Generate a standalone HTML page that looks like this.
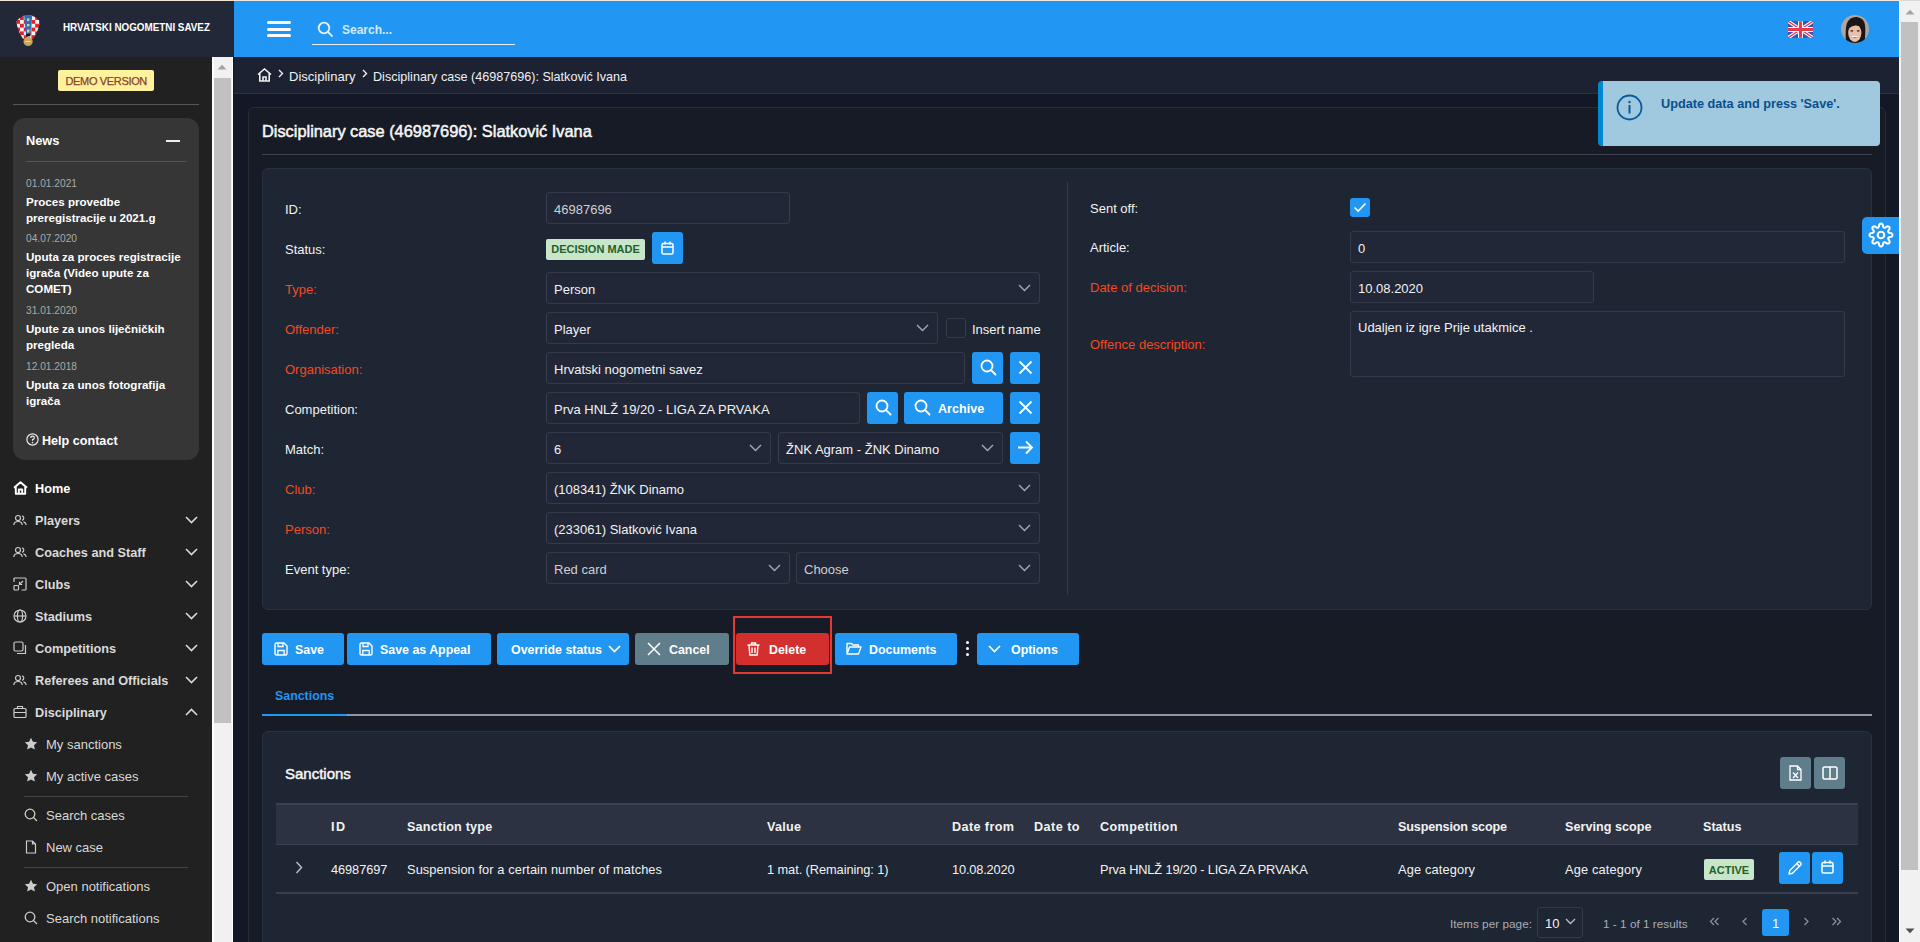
<!DOCTYPE html>
<html><head><meta charset="utf-8"><style>
*{box-sizing:border-box;margin:0;padding:0}
html,body{width:1920px;height:942px;overflow:hidden}
body{background:#121826;font-family:"Liberation Sans",sans-serif;color:#f2f2f2;position:relative;font-size:13px}
.a{position:absolute}
.t{position:absolute;white-space:nowrap;line-height:20px;height:20px}
svg{display:block}
.card{position:absolute;border-radius:6px}
.inp{position:absolute;background:#212737;border:1px solid #343a49;border-radius:3px;height:32px}
.inp span{position:absolute;left:7px;top:6px;line-height:20px;white-space:nowrap;color:#f2f2f2}
.chev{position:absolute;right:8px;top:11px}
.btn{position:absolute;background:#2196f3;border-radius:3px;color:#fff;font-weight:bold}
</style></head><body>
<div class="a" style="left:0px;top:0px;width:1899px;height:1px;background:#f0e6dc;"></div><div class="a" style="left:1899px;top:0px;width:21px;height:1px;background:#d9d9d9;"></div><div class="a" style="left:0px;top:1px;width:234px;height:56px;background:#222838;"></div><div class="a" style="left:234px;top:1px;width:1665px;height:56px;background:#2196f3;"></div><div class="a" style="left:0px;top:57px;width:212px;height:885px;background:#212121;"></div><div class="a" style="left:212px;top:57px;width:21px;height:885px;background:#f1f1f1;border-left:2px solid #fff;border-right:1px solid #fff"></div><div class="a" style="left:233px;top:57px;width:1px;height:885px;background:#15171c;"></div><div class="a" style="left:234px;top:57px;width:1665px;height:37px;background:#1c2232;border-bottom:1px solid #2a3142"></div><div class="a" style="left:1899px;top:1px;width:21px;height:941px;background:#f1f1f1;border-left:1px solid #fdf8f2"></div><div class="card" style="left:248px;top:107px;width:1638px;height:900px;background:#171b25;border:1px solid #262b36"></div><div class="t" style="left:262px;top:121px;font-size:16.4px;color:#f6f6f6;letter-spacing:-0.020px;-webkit-text-stroke:0.5px #f6f6f6">Disciplinary case (46987696): Slatković Ivana</div><div class="a" style="left:262px;top:154px;width:1610px;height:1px;background:#40444e;"></div><div class="card" style="left:262px;top:168px;width:1610px;height:442px;background:#1e2533;border:1px solid #293040"></div><div class="a" style="left:1067px;top:182px;width:1px;height:413px;background:#333a48;"></div><svg class="a" style="left:217px;top:64px" width="10" height="6" viewBox="0 0 10 6"><path d="M0.5 5.5 L5 0.8 L9.5 5.5 Z" fill="#a3a3a3"/></svg><div class="a" style="left:214px;top:78px;width:17px;height:645px;background:#c1c1c1;"></div><svg class="a" style="left:1905px;top:9px" width="10" height="6" viewBox="0 0 10 6"><path d="M0.5 5.5 L5 0.8 L9.5 5.5 Z" fill="#a3a3a3"/></svg><div class="a" style="left:1901px;top:22px;width:17px;height:848px;background:#c1c1c1;"></div><svg class="a" style="left:1905px;top:928px" width="10" height="6" viewBox="0 0 10 6"><path d="M0.5 0.5 L5 5.2 L9.5 0.5 Z" fill="#505050"/></svg><svg class="a" style="left:12px;top:12px" width="32" height="38" viewBox="0 0 32 38"><defs><clipPath id="shc"><path d="M4.2 9.3 Q8 5.5 12.1 3.6 L20.2 3.6 Q24.5 5.5 28 9.3 Q26 20 21.5 26.5 L16 28 L10.8 26.5 Q6 20 4.2 9.3 Z"/></clipPath>
 <pattern id="chk" x="4.2" y="8" width="7.6" height="7.6" patternUnits="userSpaceOnUse"><rect width="7.6" height="7.6" fill="#f2f2f2"/><rect width="3.8" height="3.8" fill="#e1252b"/><rect x="3.8" y="3.8" width="3.8" height="3.8" fill="#e1252b"/></pattern></defs>
 <g clip-path="url(#shc)"><rect width="32" height="30" fill="url(#chk)"/></g>
 <path d="M12.1 3.2 L20.2 3.2 L18.2 23.5 L14.1 23.5 Z" fill="#2f6fb8"/>
 <rect x="15" y="6.5" width="2.4" height="2.4" fill="#d9cf9a"/><rect x="15" y="12" width="2.4" height="2.4" fill="#d9cf9a"/><rect x="15" y="17.5" width="2.4" height="3" fill="#d9cf9a"/>
 <rect x="14.1" y="21.8" width="4.1" height="2.6" fill="#101a2c"/>
 <circle cx="16.1" cy="29.5" r="4.6" fill="#c9a455"/>
 <rect x="13.5" y="29" width="5" height="1" fill="#efe0b8"/></svg><div class="t" style="left:63px;top:17.3px;font-size:11.2px;color:#fff;font-weight:bold;transform:scaleX(0.88);transform-origin:0 0">HRVATSKI NOGOMETNI SAVEZ</div><div class="a" style="left:267px;top:21px;width:24px;height:3px;background:#fff;border-radius:2px"></div><div class="a" style="left:267px;top:27.5px;width:24px;height:3.0px;background:#fff;border-radius:2px"></div><div class="a" style="left:267px;top:34px;width:24px;height:3px;background:#fff;border-radius:2px"></div><svg class="a" style="left:317px;top:21px" width="17" height="17" viewBox="0 0 17 17"><circle cx="7" cy="7" r="5.3" fill="none" stroke="#e6f2fd" stroke-width="1.8"/><path d="M11 11 L15 15" stroke="#e6f2fd" stroke-width="1.8" stroke-linecap="round"/></svg><div class="t" style="left:342px;top:20px;font-size:12px;color:#d4e9fc;font-weight:bold;">Search...</div><div class="a" style="left:312px;top:43.5px;width:203px;height:1.5px;background:#e6f2fd;"></div><svg class="a" style="left:1788px;top:21px" width="25" height="17" viewBox="0 0 60 40"><rect width="60" height="40" fill="#3f51b5"/>
 <path d="M0 0 L60 40 M60 0 L0 40" stroke="#fff" stroke-width="8"/>
 <path d="M0 0 L60 40 M60 0 L0 40" stroke="#e53950" stroke-width="3"/>
 <path d="M30 0 V40 M0 20 H60" stroke="#fff" stroke-width="12"/>
 <path d="M30 0 V40 M0 20 H60" stroke="#e53950" stroke-width="7"/></svg><svg class="a" style="left:1841px;top:15px" width="28" height="28" viewBox="0 0 28 28"><defs><clipPath id="avc"><circle cx="14" cy="14" r="14"/></clipPath></defs>
 <g clip-path="url(#avc)">
 <rect width="28" height="28" fill="#a9a7a4"/>
 <path d="M5 28 Q4 14 6 8 Q9 1.5 16 2 Q23 3 24 10 Q25 18 23 28 Z" fill="#1c1614"/>
 <ellipse cx="13.8" cy="18" rx="6.6" ry="9" fill="#e8c0aa"/>
 <path d="M7 14 Q8 7 13 7.5 Q19 7 21 13 Q19 10.5 15 10.5 Q11 10 7 14 Z" fill="#1c1614"/>
 <ellipse cx="10.8" cy="15.8" rx="1.6" ry="0.9" fill="#5a3a30"/><ellipse cx="17.2" cy="15.8" rx="1.6" ry="0.9" fill="#5a3a30"/>
 <path d="M10.5 21.5 Q13.8 24.5 17 21.5 Z" fill="#e05a6a"/>
 <path d="M11 21.5 H16.5" stroke="#fff" stroke-width="1"/>
 <path d="M20 20 Q22 24 21 28 H24 V18 Z" fill="#1c1614"/>
 </g></svg><div class="a" style="left:58px;top:70px;width:96px;height:21px;background:#fff29c;border-radius:2px"></div><div class="t" style="left:65.5px;top:70.5px;font-size:11px;color:#8b3f2a;letter-spacing:-0.343px;-webkit-text-stroke:0.25px #8b3f2a">DEMO VERSION</div><div class="a" style="left:13px;top:103.5px;width:186px;height:1.0px;background:#555;"></div><div class="a" style="left:13px;top:118px;width:186px;height:342px;background:#363636;border-radius:12px"></div><div class="t" style="left:26px;top:131px;font-size:12.8px;color:#fff;font-weight:bold;">News</div><div class="a" style="left:166px;top:139.5px;width:14px;height:2.0px;background:#eee;"></div><div class="a" style="left:26px;top:161px;width:160px;height:1px;background:#555;"></div><div class="t" style="left:26px;top:174px;font-size:10.2px;color:#aaa;">01.01.2021</div><div class="t" style="left:26px;top:192px;font-size:11.6px;color:#fff;font-weight:bold;">Proces provedbe</div><div class="t" style="left:26px;top:208px;font-size:11.6px;color:#fff;font-weight:bold;">preregistracije u 2021.g</div><div class="t" style="left:26px;top:229px;font-size:10.2px;color:#aaa;">04.07.2020</div><div class="t" style="left:26px;top:247px;font-size:11.6px;color:#fff;font-weight:bold;">Uputa za proces registracije</div><div class="t" style="left:26px;top:263px;font-size:11.6px;color:#fff;font-weight:bold;">igrača (Video upute za</div><div class="t" style="left:26px;top:279px;font-size:11.6px;color:#fff;font-weight:bold;">COMET)</div><div class="t" style="left:26px;top:301px;font-size:10.2px;color:#aaa;">31.01.2020</div><div class="t" style="left:26px;top:319px;font-size:11.6px;color:#fff;font-weight:bold;">Upute za unos liječničkih</div><div class="t" style="left:26px;top:335px;font-size:11.6px;color:#fff;font-weight:bold;">pregleda</div><div class="t" style="left:26px;top:357px;font-size:10.2px;color:#aaa;">12.01.2018</div><div class="t" style="left:26px;top:375px;font-size:11.6px;color:#fff;font-weight:bold;">Uputa za unos fotografija</div><div class="t" style="left:26px;top:391px;font-size:11.6px;color:#fff;font-weight:bold;">igrača</div><svg class="a" style="left:26px;top:433px" width="13" height="13" viewBox="0 0 13 13"><circle cx="6.5" cy="6.5" r="5.6" fill="none" stroke="#eee" stroke-width="1.2"/><path d="M4.7 5 Q4.7 3.2 6.5 3.2 Q8.3 3.2 8.3 4.8 Q8.3 6 6.5 6.6 V7.8" fill="none" stroke="#eee" stroke-width="1.2"/><circle cx="6.5" cy="9.6" r="0.8" fill="#eee"/></svg><div class="t" style="left:42px;top:431px;font-size:12.6px;color:#fff;font-weight:bold;">Help contact</div><div class="a" style="left:13px;top:481px"><svg width="15" height="14" viewBox="0 0 15 14"><path d="M1 6.8 L7.5 1.2 L14 6.8 M2.8 5.5 V12.8 H12.2 V5.5 M5.8 12.8 V8.5 H9.2 V12.8" fill="none" stroke="#fff" stroke-width="1.9" stroke-linejoin="round"/></svg></div><div class="t" style="left:35px;top:479px;font-size:12.7px;color:#fff;font-weight:bold;">Home</div><div class="a" style="left:13px;top:513px"><svg width="14" height="14" viewBox="0 0 14 14"><circle cx="5" cy="5" r="2.5" fill="none" stroke="#ccc" stroke-width="1.2"/><path d="M0.8 12 Q1 8.5 5 8.5 Q9 8.5 9.2 12" fill="none" stroke="#ccc" stroke-width="1.2"/><path d="M9 2.8 A2.3 2.3 0 0 1 9 7.3 M10.5 8.8 Q13 9.5 13.2 12" fill="none" stroke="#ccc" stroke-width="1.2"/></svg></div><div class="t" style="left:35px;top:511px;font-size:12.7px;color:#dadada;font-weight:bold;">Players</div><div class="a" style="left:185px;top:516px"><svg width="13" height="8" viewBox="0 0 13 8"><path d="M1 1 L6.5 6.5 L12 1" fill="none" stroke="#d8d8d8" stroke-width="1.6"/></svg></div><div class="a" style="left:13px;top:545px"><svg width="14" height="14" viewBox="0 0 14 14"><circle cx="5" cy="5" r="2.5" fill="none" stroke="#ccc" stroke-width="1.2"/><path d="M0.8 12 Q1 8.5 5 8.5 Q9 8.5 9.2 12" fill="none" stroke="#ccc" stroke-width="1.2"/><path d="M9 2.8 A2.3 2.3 0 0 1 9 7.3 M10.5 8.8 Q13 9.5 13.2 12" fill="none" stroke="#ccc" stroke-width="1.2"/></svg></div><div class="t" style="left:35px;top:543px;font-size:12.7px;color:#dadada;font-weight:bold;">Coaches and Staff</div><div class="a" style="left:185px;top:548px"><svg width="13" height="8" viewBox="0 0 13 8"><path d="M1 1 L6.5 6.5 L12 1" fill="none" stroke="#d8d8d8" stroke-width="1.6"/></svg></div><div class="a" style="left:13px;top:577px"><svg width="14" height="14" viewBox="0 0 14 14"><path d="M1 5 V2 Q1 1 2 1 H12 Q13 1 13 2 V12 Q13 13 12 13 H8.5" fill="none" stroke="#ccc" stroke-width="1.2"/><rect x="1" y="8.5" width="4.5" height="4.5" rx="0.8" fill="none" stroke="#ccc" stroke-width="1.2"/><path d="M10 4 L6.5 7.5 M6.5 4.8 V7.5 H9.2" fill="none" stroke="#ccc" stroke-width="1.2"/></svg></div><div class="t" style="left:35px;top:575px;font-size:12.7px;color:#dadada;font-weight:bold;">Clubs</div><div class="a" style="left:185px;top:580px"><svg width="13" height="8" viewBox="0 0 13 8"><path d="M1 1 L6.5 6.5 L12 1" fill="none" stroke="#d8d8d8" stroke-width="1.6"/></svg></div><div class="a" style="left:13px;top:609px"><svg width="14" height="14" viewBox="0 0 14 14"><circle cx="7" cy="7" r="6" fill="none" stroke="#ccc" stroke-width="1.2"/><ellipse cx="7" cy="7" rx="2.6" ry="6" fill="none" stroke="#ccc" stroke-width="1.2"/><path d="M1 7 H13" stroke="#ccc" stroke-width="1.2"/></svg></div><div class="t" style="left:35px;top:607px;font-size:12.7px;color:#dadada;font-weight:bold;">Stadiums</div><div class="a" style="left:185px;top:612px"><svg width="13" height="8" viewBox="0 0 13 8"><path d="M1 1 L6.5 6.5 L12 1" fill="none" stroke="#d8d8d8" stroke-width="1.6"/></svg></div><div class="a" style="left:13px;top:641px"><svg width="14" height="14" viewBox="0 0 14 14"><rect x="1" y="1" width="9" height="9" rx="1.5" fill="none" stroke="#ccc" stroke-width="1.2"/><path d="M12.5 4 V12.5 H4" fill="none" stroke="#ccc" stroke-width="1.2"/></svg></div><div class="t" style="left:35px;top:639px;font-size:12.7px;color:#dadada;font-weight:bold;">Competitions</div><div class="a" style="left:185px;top:644px"><svg width="13" height="8" viewBox="0 0 13 8"><path d="M1 1 L6.5 6.5 L12 1" fill="none" stroke="#d8d8d8" stroke-width="1.6"/></svg></div><div class="a" style="left:13px;top:673px"><svg width="14" height="14" viewBox="0 0 14 14"><circle cx="5" cy="5" r="2.5" fill="none" stroke="#ccc" stroke-width="1.2"/><path d="M0.8 12 Q1 8.5 5 8.5 Q9 8.5 9.2 12" fill="none" stroke="#ccc" stroke-width="1.2"/><path d="M9 2.8 A2.3 2.3 0 0 1 9 7.3 M10.5 8.8 Q13 9.5 13.2 12" fill="none" stroke="#ccc" stroke-width="1.2"/></svg></div><div class="t" style="left:35px;top:671px;font-size:12.7px;color:#dadada;font-weight:bold;">Referees and Officials</div><div class="a" style="left:185px;top:676px"><svg width="13" height="8" viewBox="0 0 13 8"><path d="M1 1 L6.5 6.5 L12 1" fill="none" stroke="#d8d8d8" stroke-width="1.6"/></svg></div><div class="a" style="left:13px;top:705px"><svg width="14" height="14" viewBox="0 0 14 14"><rect x="1" y="3.5" width="12" height="9" rx="1" fill="none" stroke="#ccc" stroke-width="1.2"/><path d="M4.5 3.5 V1.5 H9.5 V3.5 M1 7.5 H13" fill="none" stroke="#ccc" stroke-width="1.2"/></svg></div><div class="t" style="left:35px;top:703px;font-size:12.7px;color:#dadada;font-weight:bold;">Disciplinary</div><div class="a" style="left:185px;top:708px"><svg width="13" height="8" viewBox="0 0 13 8"><path d="M1 7 L6.5 1.5 L12 7" fill="none" stroke="#d8d8d8" stroke-width="1.6"/></svg></div><div class="a" style="left:24px;top:737px"><svg width="14" height="14" viewBox="0 0 14 14"><path d="M7 0.8 L8.9 4.8 L13.2 5.3 L10 8.2 L10.9 12.6 L7 10.4 L3.1 12.6 L4 8.2 L0.8 5.3 L5.1 4.8 Z" fill="#ccc"/></svg></div><div class="t" style="left:46px;top:735px;font-size:13px;color:#d8d8d8;">My sanctions</div><div class="a" style="left:24px;top:769px"><svg width="14" height="14" viewBox="0 0 14 14"><path d="M7 0.8 L8.9 4.8 L13.2 5.3 L10 8.2 L10.9 12.6 L7 10.4 L3.1 12.6 L4 8.2 L0.8 5.3 L5.1 4.8 Z" fill="#ccc"/></svg></div><div class="t" style="left:46px;top:767px;font-size:13px;color:#d8d8d8;">My active cases</div><div class="a" style="left:24px;top:795.5px;width:164px;height:1.0px;background:#444;"></div><div class="a" style="left:24px;top:808px"><svg width="14" height="14" viewBox="0 0 14 14"><circle cx="6" cy="6" r="4.8" fill="none" stroke="#ccc" stroke-width="1.3"/><path d="M9.5 9.5 L13 13" stroke="#ccc" stroke-width="1.3"/></svg></div><div class="t" style="left:46px;top:806px;font-size:13px;color:#d8d8d8;">Search cases</div><div class="a" style="left:24px;top:840px"><svg width="14" height="14" viewBox="0 0 14 14"><path d="M2.5 1 H8.5 L11.5 4 V13 H2.5 Z M8.5 1 V4 H11.5" fill="none" stroke="#ccc" stroke-width="1.2"/></svg></div><div class="t" style="left:46px;top:838px;font-size:13px;color:#d8d8d8;">New case</div><div class="a" style="left:24px;top:866.5px;width:164px;height:1.0px;background:#444;"></div><div class="a" style="left:24px;top:879px"><svg width="14" height="14" viewBox="0 0 14 14"><path d="M7 0.8 L8.9 4.8 L13.2 5.3 L10 8.2 L10.9 12.6 L7 10.4 L3.1 12.6 L4 8.2 L0.8 5.3 L5.1 4.8 Z" fill="#ccc"/></svg></div><div class="t" style="left:46px;top:877px;font-size:13px;color:#d8d8d8;">Open notifications</div><div class="a" style="left:24px;top:911px"><svg width="14" height="14" viewBox="0 0 14 14"><circle cx="6" cy="6" r="4.8" fill="none" stroke="#ccc" stroke-width="1.3"/><path d="M9.5 9.5 L13 13" stroke="#ccc" stroke-width="1.3"/></svg></div><div class="t" style="left:46px;top:909px;font-size:13px;color:#d8d8d8;">Search notifications</div><svg class="a" style="left:257px;top:68px" width="15" height="14" viewBox="0 0 15 14"><path d="M1 6.5 L7.5 1 L14 6.5 M2.8 5.2 V13 H12.2 V5.2 M6 13 V9 H9 V13" fill="none" stroke="#f0f0f0" stroke-width="1.6"/></svg><svg class="a" style="left:278px;top:69px" width="6" height="9" viewBox="0 0 6 9"><path d="M1 1 L4.5 4.5 L1 8" fill="none" stroke="#eee" stroke-width="1.4"/></svg><div class="t" style="left:289px;top:67px;font-size:13px;color:#f0f0f0;">Disciplinary</div><svg class="a" style="left:362px;top:69px" width="6" height="9" viewBox="0 0 6 9"><path d="M1 1 L4.5 4.5 L1 8" fill="none" stroke="#eee" stroke-width="1.4"/></svg><div class="t" style="left:373px;top:67px;font-size:12.6px;color:#f0f0f0;">Disciplinary case (46987696): Slatković Ivana</div><div class="t" style="left:285px;top:200px;font-size:13px;color:#f2f2f2;">ID:</div><div class="t" style="left:285px;top:240px;font-size:13px;color:#f2f2f2;">Status:</div><div class="t" style="left:285px;top:280px;font-size:13px;color:#f44a1f;">Type:</div><div class="t" style="left:285px;top:320px;font-size:13px;color:#f44a1f;">Offender:</div><div class="t" style="left:285px;top:360px;font-size:13px;color:#f44a1f;">Organisation:</div><div class="t" style="left:285px;top:400px;font-size:13px;color:#f2f2f2;">Competition:</div><div class="t" style="left:285px;top:440px;font-size:13px;color:#f2f2f2;">Match:</div><div class="t" style="left:285px;top:480px;font-size:13px;color:#f44a1f;">Club:</div><div class="t" style="left:285px;top:520px;font-size:13px;color:#f44a1f;">Person:</div><div class="t" style="left:285px;top:560px;font-size:13px;color:#f2f2f2;">Event type:</div><div class="inp" style="left:546px;top:192px;width:244px"><span style="top:7px;color:#d0d0d0;font-size:13px">46987696</span></div><div class="a" style="left:546px;top:239px;width:99px;height:21px;background:#c8e6c9;border-radius:2px"></div><div class="t" style="left:546px;top:239px;font-size:11px;color:#256029;font-weight:bold;width:99px;text-align:center">DECISION MADE</div><div class="btn" style="left:652px;top:232px;width:31px;height:32px;background:#2196f3"><svg class="a" style="left:9px;top:9px" width="13" height="14" viewBox="0 0 13 14"><rect x="1" y="2.5" width="11" height="10.5" rx="1.5" fill="none" stroke="#fff" stroke-width="1.5"/><path d="M1 6 H12 M4 0.5 V3.5 M9 0.5 V3.5" stroke="#fff" stroke-width="1.5"/></svg></div><div class="inp" style="left:546px;top:272px;width:494px"><span style="top:7px;color:#f2f2f2;font-size:13px">Person</span><div class="chev"><svg width="13" height="8" viewBox="0 0 13 8"><path d="M1 1 L6.5 6.5 L12 1" fill="none" stroke="#a3aab5" stroke-width="1.4"/></svg></div></div><div class="inp" style="left:546px;top:312px;width:392px"><span style="top:7px;color:#f2f2f2;font-size:13px">Player</span><div class="chev"><svg width="13" height="8" viewBox="0 0 13 8"><path d="M1 1 L6.5 6.5 L12 1" fill="none" stroke="#a3aab5" stroke-width="1.4"/></svg></div></div><div class="a" style="left:946px;top:318px;width:20px;height:20px;background:#1e2533;border:1px solid #343a49;border-radius:3px"></div><div class="t" style="left:972px;top:320px;font-size:13px;color:#f2f2f2;">Insert name</div><div class="inp" style="left:546px;top:352px;width:419px"><span style="top:7px;color:#f2f2f2;font-size:13px">Hrvatski nogometni savez</span></div><div class="btn" style="left:972px;top:352px;width:31px;height:32px;background:#2196f3"><svg class="a" style="left:8px;top:7px" width="17" height="17" viewBox="0 0 17 17"><circle cx="7" cy="7" r="5.5" fill="none" stroke="#fff" stroke-width="1.8"/><path d="M11 11 L15.5 15.5" stroke="#fff" stroke-width="1.8" stroke-linecap="round"/></svg></div><div class="btn" style="left:1010px;top:352px;width:30px;height:32px;background:#2196f3"><svg class="a" style="left:8px;top:8px" width="15" height="15" viewBox="0 0 15 15"><path d="M1.5 1.5 L13.5 13.5 M13.5 1.5 L1.5 13.5" stroke="#fff" stroke-width="1.8"/></svg></div><div class="inp" style="left:546px;top:392px;width:314px"><span style="top:7px;color:#f2f2f2;font-size:13px">Prva HNLŽ 19/20 - LIGA ZA PRVAKA</span></div><div class="btn" style="left:867px;top:392px;width:31px;height:32px;background:#2196f3"><svg class="a" style="left:8px;top:7px" width="17" height="17" viewBox="0 0 17 17"><circle cx="7" cy="7" r="5.5" fill="none" stroke="#fff" stroke-width="1.8"/><path d="M11 11 L15.5 15.5" stroke="#fff" stroke-width="1.8" stroke-linecap="round"/></svg></div><div class="btn" style="left:904px;top:392px;width:99px;height:32px;background:#2196f3"><svg class="a" style="left:10px;top:7px" width="17" height="17" viewBox="0 0 17 17"><circle cx="7" cy="7" r="5.5" fill="none" stroke="#fff" stroke-width="1.8"/><path d="M11 11 L15.5 15.5" stroke="#fff" stroke-width="1.8" stroke-linecap="round"/></svg><div class="t" style="left:34px;top:7px;font-size:12.6px;font-weight:bold;color:#fff">Archive</div></div><div class="btn" style="left:1010px;top:392px;width:30px;height:32px;background:#2196f3"><svg class="a" style="left:8px;top:8px" width="15" height="15" viewBox="0 0 15 15"><path d="M1.5 1.5 L13.5 13.5 M13.5 1.5 L1.5 13.5" stroke="#fff" stroke-width="1.8"/></svg></div><div class="inp" style="left:546px;top:432px;width:225px"><span style="top:7px;color:#f2f2f2;font-size:13px">6</span><div class="chev"><svg width="13" height="8" viewBox="0 0 13 8"><path d="M1 1 L6.5 6.5 L12 1" fill="none" stroke="#a3aab5" stroke-width="1.4"/></svg></div></div><div class="inp" style="left:778px;top:432px;width:225px"><span style="top:7px;color:#f2f2f2;font-size:13px">ŽNK Agram - ŽNK Dinamo</span><div class="chev"><svg width="13" height="8" viewBox="0 0 13 8"><path d="M1 1 L6.5 6.5 L12 1" fill="none" stroke="#a3aab5" stroke-width="1.4"/></svg></div></div><div class="btn" style="left:1010px;top:432px;width:30px;height:32px;background:#2196f3"><svg class="a" style="left:7px;top:8px" width="17" height="15" viewBox="0 0 17 15"><path d="M1 7.5 H15 M9 1.5 L15 7.5 L9 13.5" fill="none" stroke="#fff" stroke-width="1.8"/></svg></div><div class="inp" style="left:546px;top:472px;width:494px"><span style="top:7px;color:#f2f2f2;font-size:13px">(108341) ŽNK Dinamo</span><div class="chev"><svg width="13" height="8" viewBox="0 0 13 8"><path d="M1 1 L6.5 6.5 L12 1" fill="none" stroke="#a3aab5" stroke-width="1.4"/></svg></div></div><div class="inp" style="left:546px;top:512px;width:494px"><span style="top:7px;color:#f2f2f2;font-size:13px">(233061) Slatković Ivana</span><div class="chev"><svg width="13" height="8" viewBox="0 0 13 8"><path d="M1 1 L6.5 6.5 L12 1" fill="none" stroke="#a3aab5" stroke-width="1.4"/></svg></div></div><div class="inp" style="left:546px;top:552px;width:244px"><span style="top:7px;color:#d0d0d0;font-size:13px">Red card</span><div class="chev"><svg width="13" height="8" viewBox="0 0 13 8"><path d="M1 1 L6.5 6.5 L12 1" fill="none" stroke="#a3aab5" stroke-width="1.4"/></svg></div></div><div class="inp" style="left:796px;top:552px;width:244px"><span style="top:7px;color:#d0d0d0;font-size:13px">Choose</span><div class="chev"><svg width="13" height="8" viewBox="0 0 13 8"><path d="M1 1 L6.5 6.5 L12 1" fill="none" stroke="#a3aab5" stroke-width="1.4"/></svg></div></div><div class="t" style="left:1090px;top:199px;font-size:13px;color:#f2f2f2;">Sent off:</div><div class="a" style="left:1350px;top:198px;width:20px;height:19px;background:#2196f3;border-radius:3px"></div><svg class="a" style="left:1353px;top:201px" width="14" height="13" viewBox="0 0 14 13"><path d="M1.5 6.5 L5.2 10 L12.5 2.5" fill="none" stroke="#fff" stroke-width="1.7"/></svg><div class="t" style="left:1090px;top:238px;font-size:13px;color:#f2f2f2;">Article:</div><div class="inp" style="left:1350px;top:231px;width:495px"><span style="top:7px;color:#f2f2f2;font-size:13px">0</span></div><div class="t" style="left:1090px;top:278px;font-size:13px;color:#f44a1f;">Date of decision:</div><div class="inp" style="left:1350px;top:271px;width:244px"><span style="top:7px;color:#f2f2f2;font-size:13px">10.08.2020</span></div><div class="t" style="left:1090px;top:335px;font-size:13px;color:#f44a1f;">Offence description:</div><div class="inp" style="left:1350px;top:311px;width:495px;height:66px"><span style="top:6px">Udaljen iz igre Prije utakmice .</span></div><div class="btn" style="left:262px;top:633px;width:82px;height:32px;background:#2196f3"><svg class="a" style="left:12px;top:9px" width="14" height="14" viewBox="0 0 14 14"><path d="M2.5 1 H10 L13 4 V11.5 Q13 13 11.5 13 H2.5 Q1 13 1 11.5 V2.5 Q1 1 2.5 1 Z" fill="none" stroke="#fff" stroke-width="1.4" stroke-linejoin="round"/><path d="M4 1 V4.5 H9 V1 M3.8 13 V8.5 H10.2 V13" fill="none" stroke="#fff" stroke-width="1.3"/></svg><div class="t" style="left:33px;top:7px;font-size:12.4px;font-weight:bold;color:#fff">Save</div></div><div class="btn" style="left:347px;top:633px;width:144px;height:32px;background:#2196f3"><svg class="a" style="left:12px;top:9px" width="14" height="14" viewBox="0 0 14 14"><path d="M2.5 1 H10 L13 4 V11.5 Q13 13 11.5 13 H2.5 Q1 13 1 11.5 V2.5 Q1 1 2.5 1 Z" fill="none" stroke="#fff" stroke-width="1.4" stroke-linejoin="round"/><path d="M4 1 V4.5 H9 V1 M3.8 13 V8.5 H10.2 V13" fill="none" stroke="#fff" stroke-width="1.3"/></svg><div class="t" style="left:33px;top:7px;font-size:12.4px;font-weight:bold;color:#fff">Save as Appeal</div></div><div class="btn" style="left:497px;top:633px;width:132px;height:32px;background:#2196f3"><div class="t" style="left:14px;top:7px;font-size:12.4px;font-weight:bold;color:#fff">Override status</div><div class="a" style="left:111px;top:12px"><svg width="13" height="8" viewBox="0 0 13 8"><path d="M1 1 L6.5 6.5 L12 1" fill="none" stroke="#fff" stroke-width="1.7"/></svg></div></div><div class="btn" style="left:635px;top:633px;width:94px;height:32px;background:#607d8b"><svg class="a" style="left:12px;top:9px" width="14" height="14" viewBox="0 0 14 14"><path d="M1 1 L13 13 M13 1 L1 13" stroke="#fff" stroke-width="1.5"/></svg><div class="t" style="left:34px;top:7px;font-size:12.4px;font-weight:bold;color:#fff">Cancel</div></div><div class="a" style="left:733px;top:616px;width:99px;height:58px;background:transparent;border:2px solid #e53935"></div><div class="btn" style="left:736px;top:633px;width:93px;height:32px;background:#d32f2f"><svg class="a" style="left:11px;top:9px" width="13" height="14" viewBox="0 0 13 14"><path d="M0.5 3 H12.5 M4.5 3 V1 H8.5 V3 M2 3 L2.8 13 H10.2 L11 3 M5 5.5 V11 M8 5.5 V11" fill="none" stroke="#fff" stroke-width="1.4"/></svg><div class="t" style="left:33px;top:7px;font-size:12.4px;font-weight:bold;color:#fff">Delete</div></div><div class="btn" style="left:835px;top:633px;width:122px;height:32px;background:#2196f3"><svg class="a" style="left:11px;top:9px" width="16" height="13" viewBox="0 0 16 13"><path d="M1 12 V1.5 H5.5 L7 3 H12.5 V5 M1 12 L3.5 5 H15 L12.5 12 Z" fill="none" stroke="#fff" stroke-width="1.4" stroke-linejoin="round"/></svg><div class="t" style="left:34px;top:7px;font-size:12.4px;font-weight:bold;color:#fff">Documents</div></div><div class="a" style="left:966px;top:641px;width:3px;height:3px;background:#fff;border-radius:50%"></div><div class="a" style="left:966px;top:647px;width:3px;height:3px;background:#fff;border-radius:50%"></div><div class="a" style="left:966px;top:653px;width:3px;height:3px;background:#fff;border-radius:50%"></div><div class="btn" style="left:977px;top:633px;width:102px;height:32px;background:#2196f3"><div class="a" style="left:11px;top:12px"><svg width="13" height="8" viewBox="0 0 13 8"><path d="M1 1 L6.5 6.5 L12 1" fill="none" stroke="#fff" stroke-width="1.7"/></svg></div><div class="t" style="left:34px;top:7px;font-size:12.4px;font-weight:bold;color:#fff">Options</div></div><div class="t" style="left:275px;top:686px;font-size:12.4px;color:#2196f3;font-weight:bold;">Sanctions</div><div class="a" style="left:262px;top:714px;width:1610px;height:2px;background:#8d97a8;"></div><div class="a" style="left:262px;top:714px;width:85px;height:2px;background:#2196f3;"></div><div class="card" style="left:262px;top:731px;width:1610px;height:260px;background:#1e2533;border:1px solid #293040"></div><div class="t" style="left:285px;top:764px;font-size:15px;color:#f6f6f6;-webkit-text-stroke:0.45px #f6f6f6">Sanctions</div><div class="btn" style="left:1780px;top:757px;width:31px;height:32px;background:#607d8b"><svg class="a" style="left:9px;top:8px" width="13" height="16" viewBox="0 0 13 16"><path d="M1 1 H8.5 L12 4.5 V15 H1 Z M8.5 1 V4.5 H12" fill="none" stroke="#fff" stroke-width="1.3"/><path d="M4 7.5 L9 13 M9 7.5 L4 13" stroke="#fff" stroke-width="1.3"/></svg></div><div class="btn" style="left:1814px;top:757px;width:31px;height:32px;background:#607d8b"><svg class="a" style="left:8px;top:9px" width="16" height="14" viewBox="0 0 16 14"><rect x="1" y="1" width="14" height="12" rx="1.5" fill="none" stroke="#fff" stroke-width="1.5"/><path d="M8 1 V13" stroke="#fff" stroke-width="1.5"/></svg></div><div class="a" style="left:276px;top:803px;width:1582px;height:42px;background:#2c3242;border-top:2px solid #3a4050;border-bottom:1px solid #3a4050"></div><div class="t" style="left:331px;top:817px;font-size:12.6px;color:#f2f2f2;font-weight:bold;letter-spacing:1.400px;">ID</div><div class="t" style="left:407px;top:817px;font-size:12.6px;color:#f2f2f2;font-weight:bold;letter-spacing:0.224px;">Sanction type</div><div class="t" style="left:767px;top:817px;font-size:12.6px;color:#f2f2f2;font-weight:bold;letter-spacing:0.270px;">Value</div><div class="t" style="left:952px;top:817px;font-size:12.6px;color:#f2f2f2;font-weight:bold;letter-spacing:0.399px;">Date from</div><div class="t" style="left:1034px;top:817px;font-size:12.6px;color:#f2f2f2;font-weight:bold;letter-spacing:0.467px;">Date to</div><div class="t" style="left:1100px;top:817px;font-size:12.6px;color:#f2f2f2;font-weight:bold;letter-spacing:0.391px;">Competition</div><div class="t" style="left:1398px;top:817px;font-size:12.6px;color:#f2f2f2;font-weight:bold;letter-spacing:-0.154px;">Suspension scope</div><div class="t" style="left:1565px;top:817px;font-size:12.6px;color:#f2f2f2;font-weight:bold;letter-spacing:0.039px;">Serving scope</div><div class="t" style="left:1703px;top:817px;font-size:12.6px;color:#f2f2f2;font-weight:bold;letter-spacing:-0.001px;">Status</div><div class="t" style="left:331px;top:860px;font-size:12.8px;color:#f2f2f2;letter-spacing:-0.078px;">46987697</div><div class="t" style="left:407px;top:860px;font-size:12.8px;color:#f2f2f2;letter-spacing:0.094px;">Suspension for a certain number of matches</div><div class="t" style="left:767px;top:860px;font-size:12.8px;color:#f2f2f2;letter-spacing:-0.073px;">1 mat. (Remaining: 1)</div><div class="t" style="left:952px;top:860px;font-size:12.8px;color:#f2f2f2;letter-spacing:-0.162px;">10.08.2020</div><div class="t" style="left:1100px;top:860px;font-size:12.8px;color:#f2f2f2;letter-spacing:-0.143px;">Prva HNLŽ 19/20 - LIGA ZA PRVAKA</div><div class="t" style="left:1398px;top:860px;font-size:12.8px;color:#f2f2f2;letter-spacing:0.144px;">Age category</div><div class="t" style="left:1565px;top:860px;font-size:12.8px;color:#f2f2f2;letter-spacing:0.144px;">Age category</div><svg class="a" style="left:295px;top:861px" width="8" height="13" viewBox="0 0 8 13"><path d="M1.5 1 L6.5 6.5 L1.5 12" fill="none" stroke="#b8bcc4" stroke-width="1.5"/></svg><div class="a" style="left:276px;top:892px;width:1582px;height:2px;background:#3a4050;"></div><div class="a" style="left:1704px;top:859px;width:50px;height:21px;background:#c8e6c9;border-radius:2px"></div><div class="t" style="left:1704px;top:859.5px;font-size:11px;color:#256029;font-weight:bold;width:50px;text-align:center">ACTIVE</div><div class="btn" style="left:1779px;top:852px;width:31px;height:32px;background:#2196f3"><svg class="a" style="left:8px;top:8px" width="16" height="16" viewBox="0 0 16 16"><path d="M2 14 L2.8 10.5 L11 2.3 Q12 1.3 13 2.3 L13.7 3 Q14.7 4 13.7 5 L5.5 13.2 Z M9.8 3.5 L12.5 6.2" fill="none" stroke="#fff" stroke-width="1.4" stroke-linejoin="round"/></svg></div><div class="btn" style="left:1812px;top:852px;width:31px;height:32px;background:#2196f3"><svg class="a" style="left:9px;top:8px" width="13" height="14" viewBox="0 0 13 14"><rect x="1" y="2.5" width="11" height="10.5" rx="1.5" fill="none" stroke="#fff" stroke-width="1.5"/><path d="M1 6 H12 M4 0.5 V3.5 M9 0.5 V3.5" stroke="#fff" stroke-width="1.5"/></svg></div><div class="t" style="left:1450px;top:914px;font-size:11.8px;color:#a8adb6;">Items per page:</div><div class="a" style="left:1537px;top:907px;width:46px;height:31px;background:#1e2533;border:1px solid #343a49;border-radius:3px"></div><div class="t" style="left:1545px;top:914px;font-size:13px;color:#f2f2f2;">10</div><svg class="a" style="left:1565px;top:918px" width="11" height="7" viewBox="0 0 11 7"><path d="M1 1 L5.5 5.5 L10 1" fill="none" stroke="#b8bcc4" stroke-width="1.4"/></svg><div class="t" style="left:1603px;top:914px;font-size:11.8px;color:#a8adb6;">1 - 1 of 1 results</div><svg class="a" style="left:1709px;top:917px" width="11" height="9" viewBox="0 0 11 9"><path d="M5 1 L1.5 4.5 L5 8 M9.5 1 L6 4.5 L9.5 8" fill="none" stroke="#8a909a" stroke-width="1.3"/></svg><svg class="a" style="left:1741px;top:917px" width="7" height="9" viewBox="0 0 7 9"><path d="M5.5 1 L2 4.5 L5.5 8" fill="none" stroke="#8a909a" stroke-width="1.3"/></svg><div class="a" style="left:1762px;top:909px;width:27px;height:27px;background:#2196f3;border-radius:3px"></div><div class="t" style="left:1762px;top:914px;font-size:13px;color:#fff;width:27px;text-align:center">1</div><svg class="a" style="left:1803px;top:917px" width="7" height="9" viewBox="0 0 7 9"><path d="M1.5 1 L5 4.5 L1.5 8" fill="none" stroke="#8a909a" stroke-width="1.3"/></svg><svg class="a" style="left:1831px;top:917px" width="11" height="9" viewBox="0 0 11 9"><path d="M1.5 1 L5 4.5 L1.5 8 M6 1 L9.5 4.5 L6 8" fill="none" stroke="#8a909a" stroke-width="1.3"/></svg><div class="a" style="left:1598px;top:81px;width:282px;height:65px;background:#a0c8df;border-radius:4px;border-left:5px solid #0288d1"></div><svg class="a" style="left:1616px;top:94px" width="27" height="27" viewBox="0 0 27 27"><circle cx="13.5" cy="13.5" r="12" fill="none" stroke="#045c9c" stroke-width="1.8"/><circle cx="13.5" cy="8" r="1.2" fill="#045c9c"/><path d="M13.5 11 V19.5" stroke="#045c9c" stroke-width="2"/></svg><div class="t" style="left:1661px;top:94px;font-size:12.7px;color:#0a4f8c;font-weight:bold;">Update data and press 'Save'.</div><div class="a" style="left:1862px;top:217px;width:37px;height:37px;background:#2196f3;border-radius:5px 0 0 5px"></div><svg class="a" style="left:1868px;top:222px" width="26" height="26" viewBox="0 0 26 26"><path d="M13.00 1.50 L13.45 1.56 L13.89 1.75 L14.29 2.07 L14.66 2.54 L14.89 3.49 L15.06 4.43 L15.28 4.92 L15.51 5.28 L15.75 5.54 L16.02 5.70 L16.33 5.78 L16.68 5.77 L17.10 5.68 L17.60 5.49 L18.39 4.93 L19.22 4.43 L19.82 4.35 L20.33 4.42 L20.77 4.59 L21.13 4.87 L21.41 5.23 L21.58 5.67 L21.65 6.18 L21.57 6.78 L21.07 7.61 L20.51 8.40 L20.32 8.90 L20.23 9.32 L20.22 9.67 L20.30 9.98 L20.46 10.25 L20.72 10.49 L21.08 10.72 L21.57 10.94 L22.51 11.11 L23.46 11.34 L23.93 11.71 L24.25 12.11 L24.44 12.55 L24.50 13.00 L24.44 13.45 L24.25 13.89 L23.93 14.29 L23.46 14.66 L22.51 14.89 L21.57 15.06 L21.08 15.28 L20.72 15.51 L20.46 15.75 L20.30 16.02 L20.22 16.33 L20.23 16.68 L20.32 17.10 L20.51 17.60 L21.07 18.39 L21.57 19.22 L21.65 19.82 L21.58 20.33 L21.41 20.77 L21.13 21.13 L20.77 21.41 L20.33 21.58 L19.82 21.65 L19.22 21.57 L18.39 21.07 L17.60 20.51 L17.10 20.32 L16.68 20.23 L16.33 20.22 L16.02 20.30 L15.75 20.46 L15.51 20.72 L15.28 21.08 L15.06 21.57 L14.89 22.51 L14.66 23.46 L14.29 23.93 L13.89 24.25 L13.45 24.44 L13.00 24.50 L12.55 24.44 L12.11 24.25 L11.71 23.93 L11.34 23.46 L11.11 22.51 L10.94 21.57 L10.72 21.08 L10.49 20.72 L10.25 20.46 L9.98 20.30 L9.67 20.22 L9.32 20.23 L8.90 20.32 L8.40 20.51 L7.61 21.07 L6.78 21.57 L6.18 21.65 L5.67 21.58 L5.23 21.41 L4.87 21.13 L4.59 20.77 L4.42 20.33 L4.35 19.82 L4.43 19.22 L4.93 18.39 L5.49 17.60 L5.68 17.10 L5.77 16.68 L5.78 16.33 L5.70 16.02 L5.54 15.75 L5.28 15.51 L4.92 15.28 L4.43 15.06 L3.49 14.89 L2.54 14.66 L2.07 14.29 L1.75 13.89 L1.56 13.45 L1.50 13.00 L1.56 12.55 L1.75 12.11 L2.07 11.71 L2.54 11.34 L3.49 11.11 L4.43 10.94 L4.92 10.72 L5.28 10.49 L5.54 10.25 L5.70 9.98 L5.78 9.67 L5.77 9.32 L5.68 8.90 L5.49 8.40 L4.93 7.61 L4.43 6.78 L4.35 6.18 L4.42 5.67 L4.59 5.23 L4.87 4.87 L5.23 4.59 L5.67 4.42 L6.18 4.35 L6.78 4.43 L7.61 4.93 L8.40 5.49 L8.90 5.68 L9.32 5.77 L9.67 5.78 L9.98 5.70 L10.25 5.54 L10.49 5.28 L10.72 4.92 L10.94 4.43 L11.11 3.49 L11.34 2.54 L11.71 2.07 L12.11 1.75 L12.55 1.56 Z" fill="none" stroke="#fff" stroke-width="2" stroke-linejoin="round"/><circle cx="13" cy="13" r="3.3" fill="none" stroke="#fff" stroke-width="2"/></svg>
</body></html>
